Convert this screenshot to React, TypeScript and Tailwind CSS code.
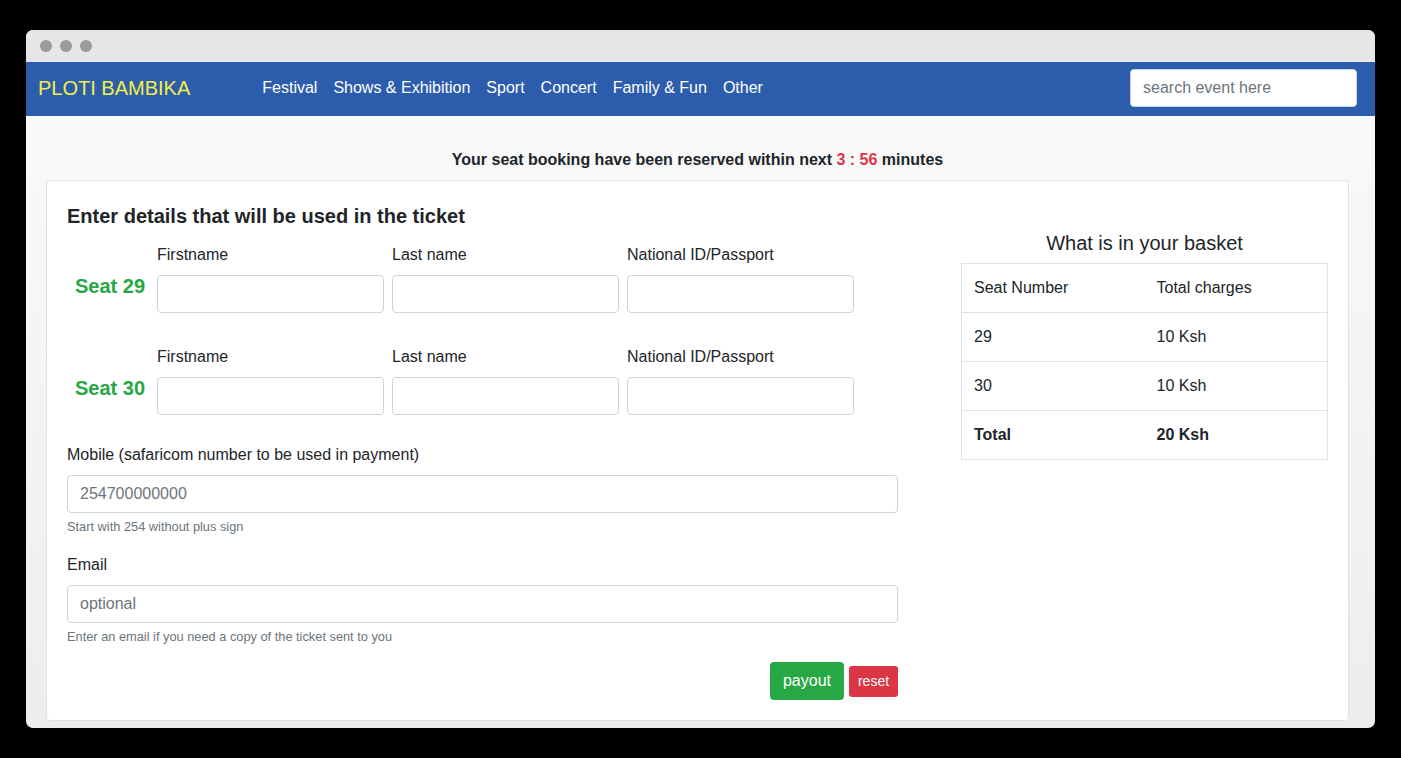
import React from 'react';

const navLinks = ['Festival', 'Shows & Exhibition', 'Sport', 'Concert', 'Family & Fun', 'Other'];

const basket = [
  { seat: '29', charge: '10 Ksh' },
  { seat: '30', charge: '10 Ksh' },
];

const inputCls =
  'h-[38px] w-full rounded-[4px] border border-[#ced4da] bg-white px-3 text-[16px] text-[#495057] placeholder:text-[#6c757d] outline-none';

const SeatRow = ({ seat }: { seat: number }) => (
  <div className="flex">
    <div className="w-[90px] pt-[31px] pr-[4px] text-center text-[20px] leading-[24px] font-bold text-[#28a745]">
      Seat {seat}
    </div>
    <div className="flex gap-2">
      {['Firstname', 'Last name', 'National ID/Passport'].map((l) => (
        <div key={l} className="w-[227px]">
          <label className="mb-[8px] block text-[16px] leading-[24px] text-[#212529]">{l}</label>
          <input className={inputCls} />
        </div>
      ))}
    </div>
  </div>
);

export default function App() {
  return (
    <div className="h-[758px] w-full bg-black px-[26px] pt-[30px] font-['Liberation_Sans',Arial,sans-serif]">
      <div className="flex h-[698px] w-[1349px] flex-col overflow-hidden rounded-[7px] bg-[linear-gradient(to_bottom,#fbfbfb,#ededed)]">
        {/* title bar */}
        <div className="flex h-[32px] items-center gap-2 bg-[#e6e6e6] pl-[14px]">
          <span className="h-3 w-3 rounded-full bg-[#9b9b9b]" />
          <span className="h-3 w-3 rounded-full bg-[#9b9b9b]" />
          <span className="h-3 w-3 rounded-full bg-[#9b9b9b]" />
        </div>

        {/* navbar */}
        <nav className="flex h-[54px] items-center bg-[#2c5dac] pb-[2px] pl-3 pr-[18px]">
          <span className="text-[20px] leading-[24px] text-[#f3ef47]">PLOTI BAMBIKA</span>
          <ul className="ml-[64px] flex">
            {navLinks.map((n) => (
              <li key={n} className="px-2 text-[16px] leading-[24px] text-white">
                {n}
              </li>
            ))}
          </ul>
          <input
            placeholder="search event here"
            className="ml-auto h-[38px] w-[227px] rounded-[4px] border border-[#ced4da] bg-white px-3 text-[16px] placeholder:text-[#6c757d] outline-none"
          />
        </nav>

        {/* content */}
        <div className="pl-[20px] pr-[26px] pt-[32px]">
          <p className="mb-[8px] text-center text-[16px] leading-[24px] font-bold text-[#212529]">
            Your seat booking have been reserved within next <span className="text-[#dc3545]">3 : 56</span> minutes
          </p>

          <div className="flex h-[541px] rounded-[4px] border border-[#dee2e6] bg-white px-[20px] pt-[23px]">
            {/* left column */}
            <div className="w-[831px]">
              <h2 className="text-[20px] leading-[24px] font-bold text-[#212529]">
                Enter details that will be used in the ticket
              </h2>
              <div className="mt-[15px] flex flex-col gap-[32px]">
                <SeatRow seat={29} />
                <SeatRow seat={30} />
              </div>

              <div className="mt-[28px]">
                <label className="mb-[8px] block text-[16px] leading-[24px] text-[#212529]">
                  Mobile (safaricom number to be used in payment)
                </label>
                <input className={inputCls} placeholder="254700000000" />
                <small className="mt-[4px] block text-[12.8px] leading-[20px] text-[#6c757d]">
                  Start with 254 without plus sign
                </small>
              </div>

              <div className="mt-[16px]">
                <label className="mb-[8px] block text-[16px] leading-[24px] text-[#212529]">Email</label>
                <input className={inputCls} placeholder="optional" />
                <small className="mt-[4px] block text-[12.8px] leading-[20px] text-[#6c757d]">
                  Enter an email if you need a copy of the ticket sent to you
                </small>
              </div>

              <div className="mt-[15px] flex items-center justify-end gap-[5px]">
                <button className="h-[38px] w-[74px] rounded-[4px] bg-[#28a745] text-[16px] text-white">payout</button>
                <button className="h-[31px] w-[49px] rounded-[3px] bg-[#dc3545] text-[14px] text-white">reset</button>
              </div>
            </div>

            {/* right column */}
            <div className="ml-[63px] w-[367px] pt-[27px]">
              <h3 className="mb-[8px] text-center text-[20px] leading-[24px] text-[#212529]">What is in your basket</h3>
              <table className="w-full border-collapse border border-[#dee2e6] text-[16px] leading-[24px] text-[#212529]">
                <tbody>
                  <tr>
                    <td className="w-1/2 border-t border-[#dee2e6] p-3">Seat Number</td>
                    <td className="border-t border-[#dee2e6] p-3">Total charges</td>
                  </tr>
                  {basket.map((b) => (
                    <tr key={b.seat}>
                      <td className="border-t border-[#dee2e6] p-3">{b.seat}</td>
                      <td className="border-t border-[#dee2e6] p-3">{b.charge}</td>
                    </tr>
                  ))}
                  <tr className="font-bold">
                    <td className="border-t border-[#dee2e6] p-3">Total</td>
                    <td className="border-t border-[#dee2e6] p-3">20 Ksh</td>
                  </tr>
                </tbody>
              </table>
            </div>
          </div>
        </div>
      </div>
    </div>
  );
}
